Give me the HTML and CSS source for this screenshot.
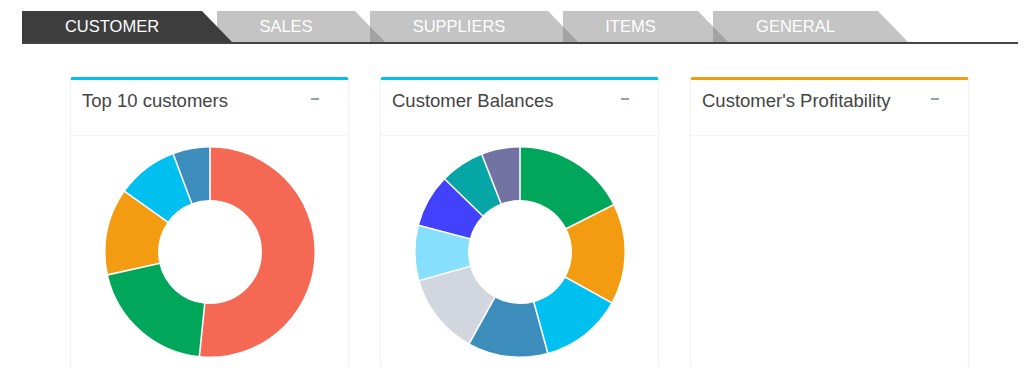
FILE: index.html
```html
<!DOCTYPE html>
<html lang="en">

<head>
    <meta charset="UTF-8">
    <title>Customer dashboard</title>
    <link rel="stylesheet" href="styles.css">
</head>

<body>
    <div class="page">
        <ul class="tabs">
            <li class="tab active tab-customer">CUSTOMER</li>
            <li class="tab tab-sales">SALES</li>
            <li class="tab tab-suppliers">SUPPLIERS</li>
            <li class="tab tab-items">ITEMS</li>
            <li class="tab tab-general">GENERAL</li>
        </ul>

        <div class="boxes">
            <div class="box box-info">
                <div class="box-header">
                    <h3 class="box-title">Top 10 customers</h3>
                    <span class="collapse-btn"><span class="minus"></span></span>
                </div>
                <div class="box-body">
                    <svg class="donut" viewBox="0 0 210 210" width="210" height="210">
                        <g transform="translate(105 105) rotate(-90)">
                            <circle r="78.25" pathLength="360" stroke="#f56954" stroke-dasharray="185.8 360" stroke-dashoffset="0" />
                            <circle r="78.25" pathLength="360" stroke="#00a65a" stroke-dasharray="71.6 360" stroke-dashoffset="-185.8" />
                            <circle r="78.25" pathLength="360" stroke="#f39c12" stroke-dasharray="48 360" stroke-dashoffset="-257.4" />
                            <circle r="78.25" pathLength="360" stroke="#00c0ef" stroke-dasharray="34 360" stroke-dashoffset="-305.4" />
                            <circle r="78.25" pathLength="360" stroke="#3c8dbc" stroke-dasharray="20.6 360" stroke-dashoffset="-339.4" />
                        </g>
                        <g class="seps" transform="translate(105 105)">
                            <line y1="-50" y2="-106" transform="rotate(0)" />
                            <line y1="-50" y2="-106" transform="rotate(185.8)" />
                            <line y1="-50" y2="-106" transform="rotate(257.4)" />
                            <line y1="-50" y2="-106" transform="rotate(305.4)" />
                            <line y1="-50" y2="-106" transform="rotate(339.4)" />
                        </g>
                    </svg>
                </div>
            </div>

            <div class="box box-info">
                <div class="box-header">
                    <h3 class="box-title">Customer Balances</h3>
                    <span class="collapse-btn"><span class="minus"></span></span>
                </div>
                <div class="box-body">
                    <svg class="donut" viewBox="0 0 210 210" width="210" height="210">
                        <g transform="translate(105 105) rotate(-90)">
                            <circle r="78.25" pathLength="360" stroke="#00a65a" stroke-dasharray="63.2 360" stroke-dashoffset="0" />
                            <circle r="78.25" pathLength="360" stroke="#f39c12" stroke-dasharray="55.8 360" stroke-dashoffset="-63.2" />
                            <circle r="78.25" pathLength="360" stroke="#00c0ef" stroke-dasharray="45.6 360" stroke-dashoffset="-119" />
                            <circle r="78.25" pathLength="360" stroke="#3c8dbc" stroke-dasharray="44.4 360" stroke-dashoffset="-164.6" />
                            <circle r="78.25" pathLength="360" stroke="#d2d6de" stroke-dasharray="45.1 360" stroke-dashoffset="-209" />
                            <circle r="78.25" pathLength="360" stroke="#86dffc" stroke-dasharray="30.7 360" stroke-dashoffset="-254.1" />
                            <circle r="78.25" pathLength="360" stroke="#4242fc" stroke-dasharray="29.3 360" stroke-dashoffset="-284.8" />
                            <circle r="78.25" pathLength="360" stroke="#06a6a6" stroke-dasharray="24.5 360" stroke-dashoffset="-314.1" />
                            <circle r="78.25" pathLength="360" stroke="#7272a3" stroke-dasharray="21.4 360" stroke-dashoffset="-338.6" />
                        </g>
                        <g class="seps" transform="translate(105 105)">
                            <line y1="-50" y2="-106" transform="rotate(0)" />
                            <line y1="-50" y2="-106" transform="rotate(63.2)" />
                            <line y1="-50" y2="-106" transform="rotate(119)" />
                            <line y1="-50" y2="-106" transform="rotate(164.6)" />
                            <line y1="-50" y2="-106" transform="rotate(209)" />
                            <line y1="-50" y2="-106" transform="rotate(254.1)" />
                            <line y1="-50" y2="-106" transform="rotate(284.8)" />
                            <line y1="-50" y2="-106" transform="rotate(314.1)" />
                            <line y1="-50" y2="-106" transform="rotate(338.6)" />
                        </g>
                    </svg>
                </div>
            </div>

            <div class="box box-warning">
                <div class="box-header">
                    <h3 class="box-title">Customer's Profitability</h3>
                    <span class="collapse-btn"><span class="minus"></span></span>
                </div>
                <div class="box-body"></div>
            </div>
        </div>
    </div>
</body>

</html>
```

FILE: styles.css
```css
* {
    padding: 0;
    margin: 0;
    box-sizing: border-box;
}

body {
    background: #fff;
    font-family: 'Liberation Sans', Arial, sans-serif;
}

.page {
    padding: 11px 6px 0 22px;
}

/* tabs */

.tabs {
    display: flex;
    list-style: none;
    border-bottom: 2px solid #444;
}

.tab {
    position: relative;
    height: 31px;
    line-height: 31px;
    padding-right: 30px;
    margin-right: -15px;
    text-align: center;
    color: #fff;
    background: #c4c4c4;
    font-size: 16.5px;
    clip-path: polygon(0 0, calc(100% - 30px) 0, 100% 100%, 0 100%);
}

.tab.active {
    background: #3d3d3d;
}

.tab + .tab::before {
    content: "";
    position: absolute;
    left: 0;
    top: 0;
    width: 15px;
    height: 100%;
    background: #a3a3a3;
    clip-path: polygon(0 50%, 100% 100%, 0 100%);
}

.tab.active + .tab::before {
    background: #3d3d3d;
}

.tab-customer { width: 210px; }
.tab-sales { width: 168px; }
.tab-suppliers { width: 208px; }
.tab-items { width: 165px; }
.tab-general { width: 195px; }

/* boxes */

.boxes {
    display: grid;
    grid-template-columns: repeat(3, 279px);
    column-gap: 31px;
    padding: 33px 48px 0 48px;
}

.box {
    height: 291px;
    background: #fff;
    border-top: 3px solid #00c0ef;
    border-left: 1px solid #f3f3f3;
    border-right: 1px solid #f3f3f3;
    border-radius: 3px;
    box-shadow: 0 1px 1px rgba(0, 0, 0, 0.1);
}

.box-warning {
    border-top-color: #f39c12;
}

.box-header {
    display: flex;
    justify-content: space-between;
    align-items: flex-start;
    height: 56px;
    padding: 10px 29px 0 11px;
    border-bottom: 1px solid #f4f4f4;
}

.box-title {
    font-size: 18.5px;
    font-weight: normal;
    color: #444;
    line-height: 21px;
}

.collapse-btn {
    display: flex;
    align-items: center;
    height: 18px;
}

.minus {
    width: 8px;
    height: 2px;
    background: #97a0b3;
}

.box-body {
    display: flex;
    justify-content: center;
    padding-top: 11px;
}

.donut circle {
    fill: none;
    stroke-width: 52.5;
}

.seps line {
    stroke: #fff;
    stroke-width: 1.6;
}
```
